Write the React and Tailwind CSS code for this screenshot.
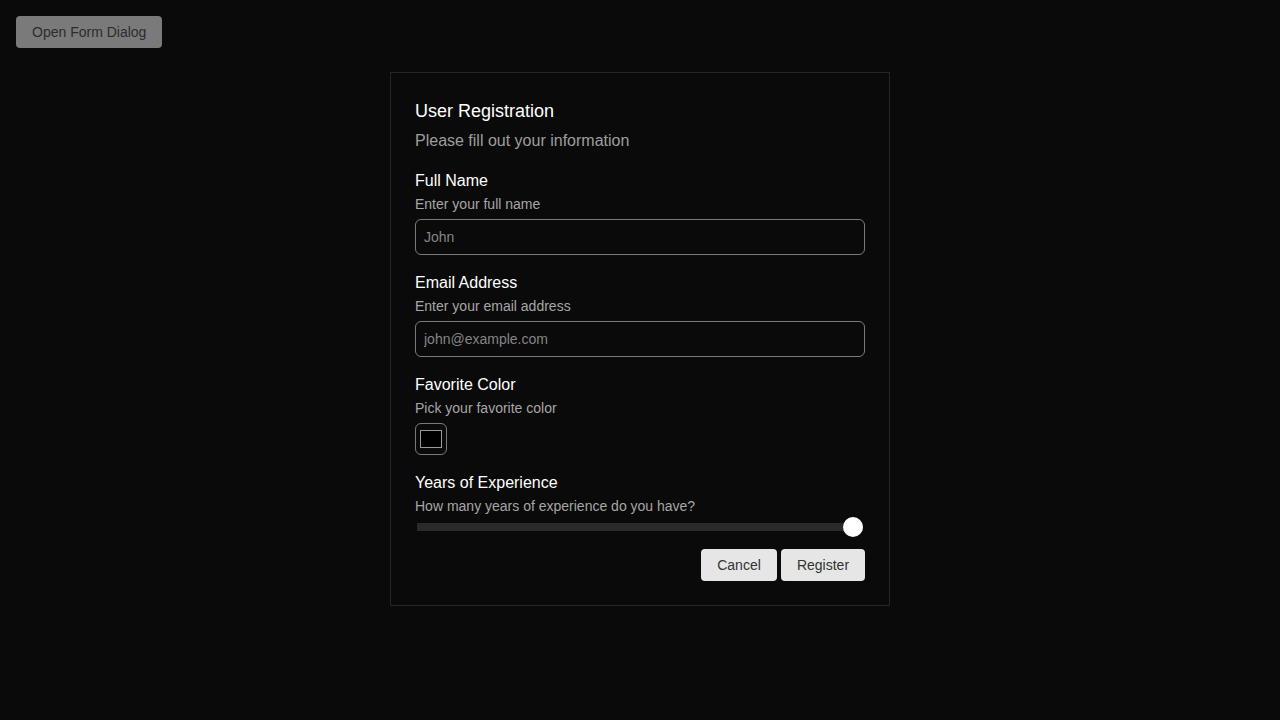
import React, { useState } from 'react';

const fields = [
  { id: 'name', label: 'Full Name', help: 'Enter your full name', placeholder: 'John', type: 'text' },
  { id: 'email', label: 'Email Address', help: 'Enter your email address', placeholder: 'john@example.com', type: 'email' },
];

export default function App() {
  const [years, setYears] = useState(100);

  return (
    <div className="min-h-screen bg-[#0a0a0a] font-['Liberation_Sans',Arial,sans-serif]">
      {/* Trigger (dimmed behind overlay) */}
      <div className="p-4">
        <button className="h-8 px-4 rounded bg-[#7a7a7a] text-sm text-[#2c2c2c]">Open Form Dialog</button>
      </div>

      {/* Dialog */}
      <div className="flex justify-center mt-2">
        <div className="w-[500px] border border-[#262626] bg-[#0a0a0a] p-6">
          <h2 className="pt-px text-lg leading-[27px] text-white">User Registration</h2>
          <p className="mt-1 text-base leading-6 text-[#9e9e9e]">Please fill out your information</p>

          <div className="mt-[15px] flex flex-col gap-[15px]">
            {fields.map((f) => (
              <div key={f.id}>
                <label className="block pt-px text-base leading-6 text-white">{f.label}</label>
                <p className="mt-px text-sm leading-5 text-[#a6a6a6]">{f.help}</p>
                <input
                  type={f.type}
                  placeholder={f.placeholder}
                  className="mt-[5px] block w-full h-9 rounded-md border border-[#7a7a7a] bg-transparent px-2 text-sm text-white placeholder:text-[#858585] outline-none"
                />
              </div>
            ))}

            <div>
              <label className="block pt-px text-base leading-6 text-white">Favorite Color</label>
              <p className="mt-px text-sm leading-5 text-[#a6a6a6]">Pick your favorite color</p>
              <div className="mt-[5px] w-8 h-8 rounded-md border border-[#7a7a7a] flex items-center justify-center">
                <div className="w-[22px] h-[18px] bg-black border border-[#9a9a9a]" />
              </div>
            </div>

            <div>
              <label className="block pt-px text-base leading-6 text-white">Years of Experience</label>
              <p className="mt-px text-sm leading-5 text-[#a6a6a6]">How many years of experience do you have?</p>
              <div className="relative mt-px h-5 flex items-center px-0.5">
                <div className="h-2 w-full bg-[#2a2a2a]" />
                <div
                  className="absolute top-0 w-5 h-5 rounded-full bg-white"
                  style={{ left: `calc(${years}% - 22px)` }}
                />
              </div>
            </div>
          </div>

          <div className="mt-3 flex justify-end gap-1">
            <button className="h-8 w-[76px] rounded bg-[#e6e6e6] text-sm text-[#333]" onClick={() => setYears(years)}>Cancel</button>
            <button className="h-8 w-[84px] rounded bg-[#e6e6e6] text-sm text-[#333]">Register</button>
          </div>
        </div>
      </div>
    </div>
  );
}
